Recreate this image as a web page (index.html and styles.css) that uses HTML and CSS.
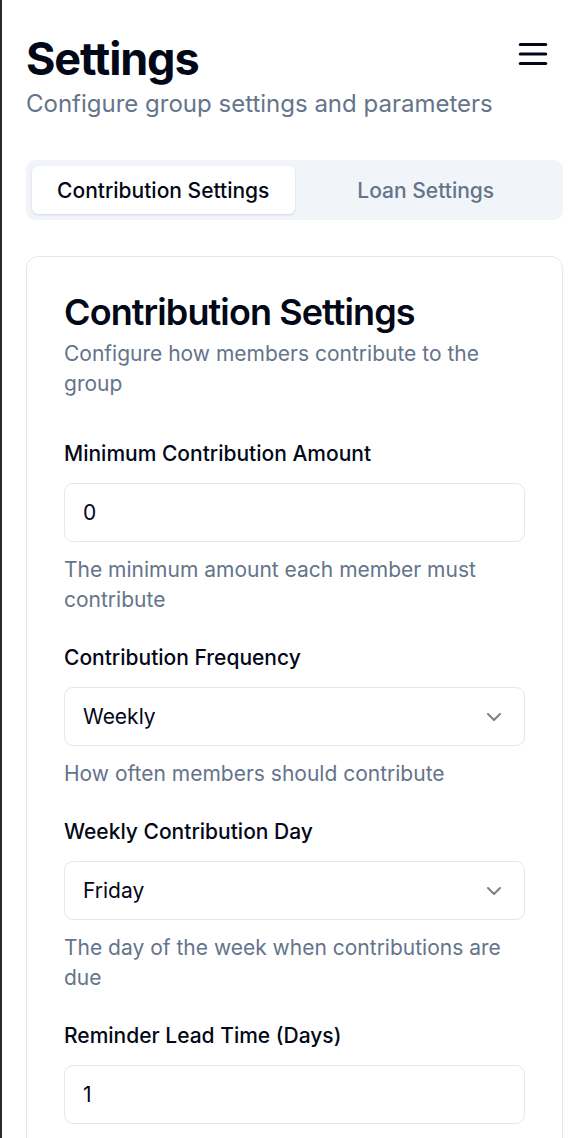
FILE: index.html
```html
<!DOCTYPE html>
<html lang="en">
<head>
<meta charset="utf-8">
<title>Settings</title>
<link rel="stylesheet" href="styles.css">
</head>
<body>
<div class="page">
  <header class="header">
    <div class="header-text">
      <h1 class="title">Settings</h1>
      <p class="subtitle">Configure group settings and parameters</p>
    </div>
    <button class="menu-btn" aria-label="Menu">
      <svg width="38" height="38" viewBox="0 0 24 24" fill="none" stroke="#020817" stroke-width="2" stroke-linecap="round" stroke-linejoin="round"><line x1="4" y1="6" x2="20" y2="6"/><line x1="4" y1="12" x2="20" y2="12"/><line x1="4" y1="18" x2="20" y2="18"/></svg>
    </button>
  </header>

  <div class="tabs">
    <div class="tab active">Contribution Settings</div>
    <div class="tab">Loan Settings</div>
  </div>

  <section class="card">
    <div class="card-header">
      <h2 class="card-title">Contribution Settings</h2>
      <p class="card-desc">Configure how members contribute to the group</p>
    </div>
    <div class="form">
      <div class="item">
        <label class="label">Minimum Contribution Amount</label>
        <div class="input">0</div>
        <p class="help">The minimum amount each member must contribute</p>
      </div>
      <div class="item">
        <label class="label">Contribution Frequency</label>
        <div class="input select"><span>Weekly</span>
          <svg class="chev" width="24" height="24" viewBox="0 0 24 24" fill="none" stroke="#020817" stroke-width="2" stroke-linecap="round" stroke-linejoin="round"><path d="m6 9 6 6 6-6"/></svg>
        </div>
        <p class="help">How often members should contribute</p>
      </div>
      <div class="item">
        <label class="label">Weekly Contribution Day</label>
        <div class="input select"><span>Friday</span>
          <svg class="chev" width="24" height="24" viewBox="0 0 24 24" fill="none" stroke="#020817" stroke-width="2" stroke-linecap="round" stroke-linejoin="round"><path d="m6 9 6 6 6-6"/></svg>
        </div>
        <p class="help">The day of the week when contributions are due</p>
      </div>
      <div class="item">
        <label class="label">Reminder Lead Time (Days)</label>
        <div class="input">1</div>
      </div>
    </div>
  </section>
</div>
</body>
</html>
```

FILE: styles.css
```css
* { box-sizing: border-box; }
html, body { margin: 0; padding: 0; background: #ffffff; }
body {
  font-family: Inter, "Noto Sans", "Liberation Sans", sans-serif;
  color: #020817;
}
.page {
  border-left: 2px solid #2b2b2b;
  min-height: 100vh;
  padding: 24px 17px 40px 24px;
}
.header {
  display: flex;
  justify-content: space-between;
  align-items: flex-start;
}
.header-text { padding-top: 8px; }
.title {
  margin: 0;
  font-size: 45px;
  line-height: 54px;
  font-weight: 700;
  letter-spacing: -0.025em;
}
.subtitle {
  margin: 0;
  font-size: 24px;
  line-height: 36px;
  color: #64748b;
}
.menu-btn {
  width: 60px;
  height: 60px;
  border: 0;
  background: transparent;
  padding: 0;
  display: flex;
  align-items: center;
  justify-content: center;
}
.tabs {
  margin-top: 38px;
  height: 60px;
  background: #f1f5f9;
  border-radius: 9px;
  padding: 6px;
  display: grid;
  grid-template-columns: 1fr 1fr;
}
.tab {
  display: flex;
  align-items: center;
  justify-content: center;
  font-size: 21px;
  font-weight: 500;
  color: #64748b;
  border-radius: 6px;
}
.tab.active {
  background: #ffffff;
  color: #020817;
  box-shadow: 0 1px 3px rgba(0,0,0,0.08), 0 1px 2px rgba(0,0,0,0.05);
}
.card {
  margin-top: 36px;
  border: 1px solid #e2e8f0;
  border-radius: 12px;
  box-shadow: 0 1px 2px rgba(0,0,0,0.04);
  padding: 36.5px 37px 36px 37px;
}
.card-title {
  margin: 0;
  font-size: 36px;
  line-height: 36px;
  font-weight: 600;
  letter-spacing: -0.025em;
}
.card-desc {
  margin: 9px 0 0;
  font-size: 21px;
  line-height: 30px;
  color: #64748b;
}
.form {
  margin-top: 44.5px;
  display: flex;
  flex-direction: column;
  gap: 32px;
}
.item { display: flex; flex-direction: column; }
.label {
  font-size: 21px;
  line-height: 21px;
  font-weight: 500;
  margin-bottom: 19px;
}
.input {
  height: 59px;
  border: 1px solid #e2e8f0;
  border-radius: 9px;
  padding: 0 18px;
  display: flex;
  align-items: center;
  font-size: 21px;
  color: #020817;
}
.select { justify-content: space-between; }
.chev { opacity: 0.5; }
.help {
  margin: 13px 0 0;
  font-size: 21px;
  line-height: 30px;
  color: #64748b;
}
```
